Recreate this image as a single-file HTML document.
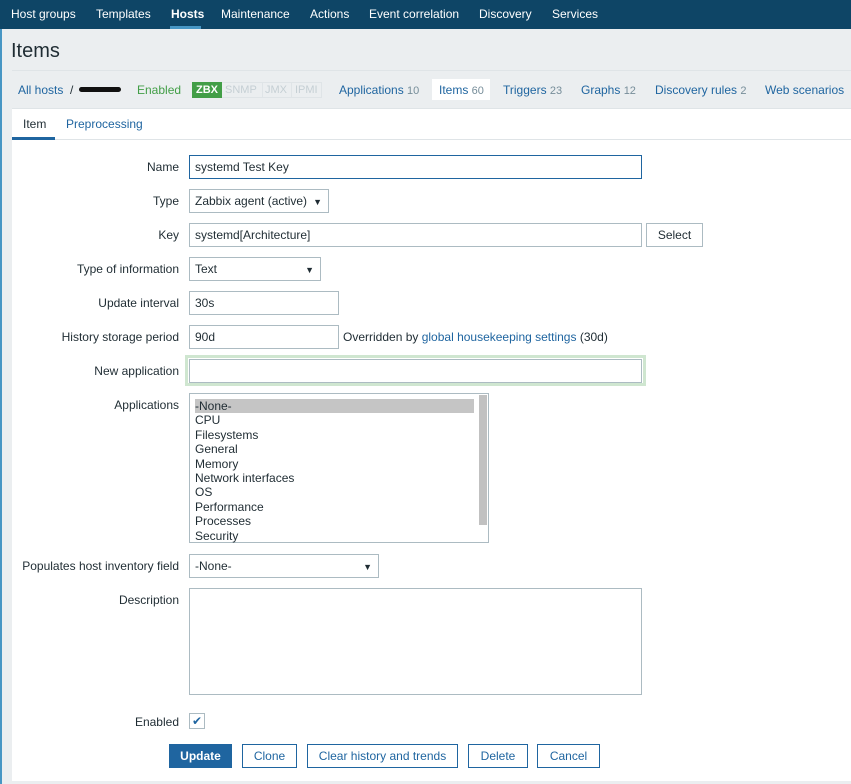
<!DOCTYPE html>
<html><head><meta charset="utf-8"><style>
*{box-sizing:border-box;margin:0;padding:0}
body{width:851px;height:784px;overflow:hidden;background:#ebeef0;font-family:"Liberation Sans",Arial,sans-serif;font-size:12px;color:#1f2c33;position:relative}
.a{position:absolute;white-space:nowrap}
.hdr{left:0;top:0;width:851px;height:29px;background:#0e4566}
.hdr span{position:absolute;top:7px;color:#fff;font-size:12px}
.lbl{right:672px;text-align:right;color:#1f2c33}
.in{border:1px solid #acbbc2;background:#fff;height:24px;padding:4px 5px;line-height:14px}
.sel::after{content:"▼";position:absolute;right:6px;top:5px;font-size:9px}
.lnk{color:#1f65a0}
.num{color:#768d99;font-size:11px}
.btn{border:1px solid #1f65a0;background:#fff;color:#1f65a0;height:24px;text-align:center;line-height:22px}
</style></head><body>
<div class="a hdr">
<span style="left:11px">Host groups</span><span style="left:96px">Templates</span><span style="left:171px;font-weight:bold">Hosts</span><span style="left:221px">Maintenance</span><span style="left:310px">Actions</span><span style="left:369px">Event correlation</span><span style="left:479px">Discovery</span><span style="left:552px">Services</span>
<div style="position:absolute;left:170px;top:26px;width:31px;height:3px;background:#4796c4"></div>
</div>
<div class="a" style="left:0;top:29px;width:2px;height:755px;background:#4796c4"></div>
<div class="a" style="left:11px;top:40px;font-size:20px">Items</div>
<div class="a" style="left:12px;top:70px;width:839px;height:1px;background:#dfe4e7"></div>
<div class="a lnk" style="left:18px;top:83px">All hosts</div>
<div class="a" style="left:70px;top:83px">/</div>
<div class="a" style="left:79px;top:87px;width:42px;height:5px;background:#111;border-radius:3px"></div>
<div class="a" style="left:137px;top:83px;color:#429e47">Enabled</div>
<div class="a" style="left:192px;top:82px;width:130px;height:16px;border:1px solid #dfe4e7"></div>
<div class="a" style="left:262px;top:82px;width:1px;height:16px;background:#dfe4e7"></div>
<div class="a" style="left:291px;top:82px;width:1px;height:16px;background:#dfe4e7"></div>
<div class="a" style="left:192px;top:82px;width:30px;height:16px;background:#429e47;color:#fff;font-weight:bold;font-size:11px;text-align:center;line-height:16px">ZBX</div>
<div class="a" style="left:225px;top:84px;color:#c5cfd4;font-size:11px">SNMP</div>
<div class="a" style="left:265px;top:84px;color:#c5cfd4;font-size:11px">JMX</div>
<div class="a" style="left:295px;top:84px;color:#c5cfd4;font-size:11px">IPMI</div>
<div class="a lnk" style="left:339px;top:83px">Applications <span class="num">10</span></div>
<div class="a" style="left:432px;top:79px;width:58px;height:21px;background:#fff"></div>
<div class="a lnk" style="left:439px;top:83px">Items <span class="num">60</span></div>
<div class="a lnk" style="left:503px;top:83px">Triggers <span class="num">23</span></div>
<div class="a lnk" style="left:581px;top:83px">Graphs <span class="num">12</span></div>
<div class="a lnk" style="left:655px;top:83px">Discovery rules <span class="num">2</span></div>
<div class="a lnk" style="left:765px;top:83px">Web scenarios</div>
<div class="a" style="left:12px;top:108px;width:839px;height:673px;background:#fff;border-top:1px solid #dfe4e7"></div>
<div class="a" style="left:23px;top:117px">Item</div>
<div class="a lnk" style="left:66px;top:117px">Preprocessing</div>
<div class="a" style="left:12px;top:139px;width:839px;height:1px;background:#dfe4e7"></div>
<div class="a" style="left:12px;top:137px;width:43px;height:3px;background:#1f65a0"></div>

<div class="a lbl" style="top:160px">Name</div>
<div class="a in" style="left:189px;top:155px;width:453px;border-color:#1f65a0">systemd Test Key</div>
<div class="a lbl" style="top:194px">Type</div>
<div class="a in sel" style="left:189px;top:189px;width:140px">Zabbix agent (active)</div>
<div class="a lbl" style="top:228px">Key</div>
<div class="a in" style="left:189px;top:223px;width:453px">systemd[Architecture]</div>
<div class="a in" style="left:646px;top:223px;width:57px;text-align:center;background:#fff">Select</div>
<div class="a lbl" style="top:262px">Type of information</div>
<div class="a in sel" style="left:189px;top:257px;width:132px">Text</div>
<div class="a lbl" style="top:296px">Update interval</div>
<div class="a in" style="left:189px;top:291px;width:150px">30s</div>
<div class="a lbl" style="top:330px">History storage period</div>
<div class="a in" style="left:189px;top:325px;width:150px">90d</div>
<div class="a" style="left:343px;top:330px">Overridden by <span class="lnk">global housekeeping settings</span> (30d)</div>
<div class="a lbl" style="top:364px">New application</div>
<div class="a" style="left:185px;top:355px;width:461px;height:31px;border:3px solid #cfe6d0"></div>
<div class="a in" style="left:189px;top:359px;width:453px"></div>
<div class="a lbl" style="top:398px">Applications</div>
<div class="a" style="left:189px;top:393px;width:300px;height:150px;border:1px solid #acbbc2;background:#fff;padding:5px 0 0 5px;line-height:14.4px;font-size:12px">
<div style="background:#c5c5c5;width:279px">-None-</div><div>CPU</div><div>Filesystems</div><div>General</div><div>Memory</div><div>Network interfaces</div><div>OS</div><div>Performance</div><div>Processes</div><div>Security</div>
<div style="position:absolute;right:1px;top:1px;width:8px;height:130px;background:#c1c1c1"></div>
</div>
<div class="a lbl" style="top:559px">Populates host inventory field</div>
<div class="a in sel" style="left:189px;top:554px;width:190px">-None-</div>
<div class="a lbl" style="top:593px">Description</div>
<div class="a in" style="left:189px;top:588px;width:453px;height:107px"></div>
<div class="a lbl" style="top:715px">Enabled</div>
<div class="a" style="left:189px;top:713px;width:16px;height:16px;border:1px solid #acbbc2;color:#1f65a0;font-size:12px;line-height:14px;text-align:center">✔</div>
<div class="a btn" style="left:169px;top:744px;width:63px;background:#1f65a0;color:#fff;font-weight:bold">Update</div>
<div class="a btn" style="left:242px;top:744px;width:55px">Clone</div>
<div class="a btn" style="left:307px;top:744px;width:151px">Clear history and trends</div>
<div class="a btn" style="left:468px;top:744px;width:60px">Delete</div>
<div class="a btn" style="left:537px;top:744px;width:63px">Cancel</div>
</body></html>
